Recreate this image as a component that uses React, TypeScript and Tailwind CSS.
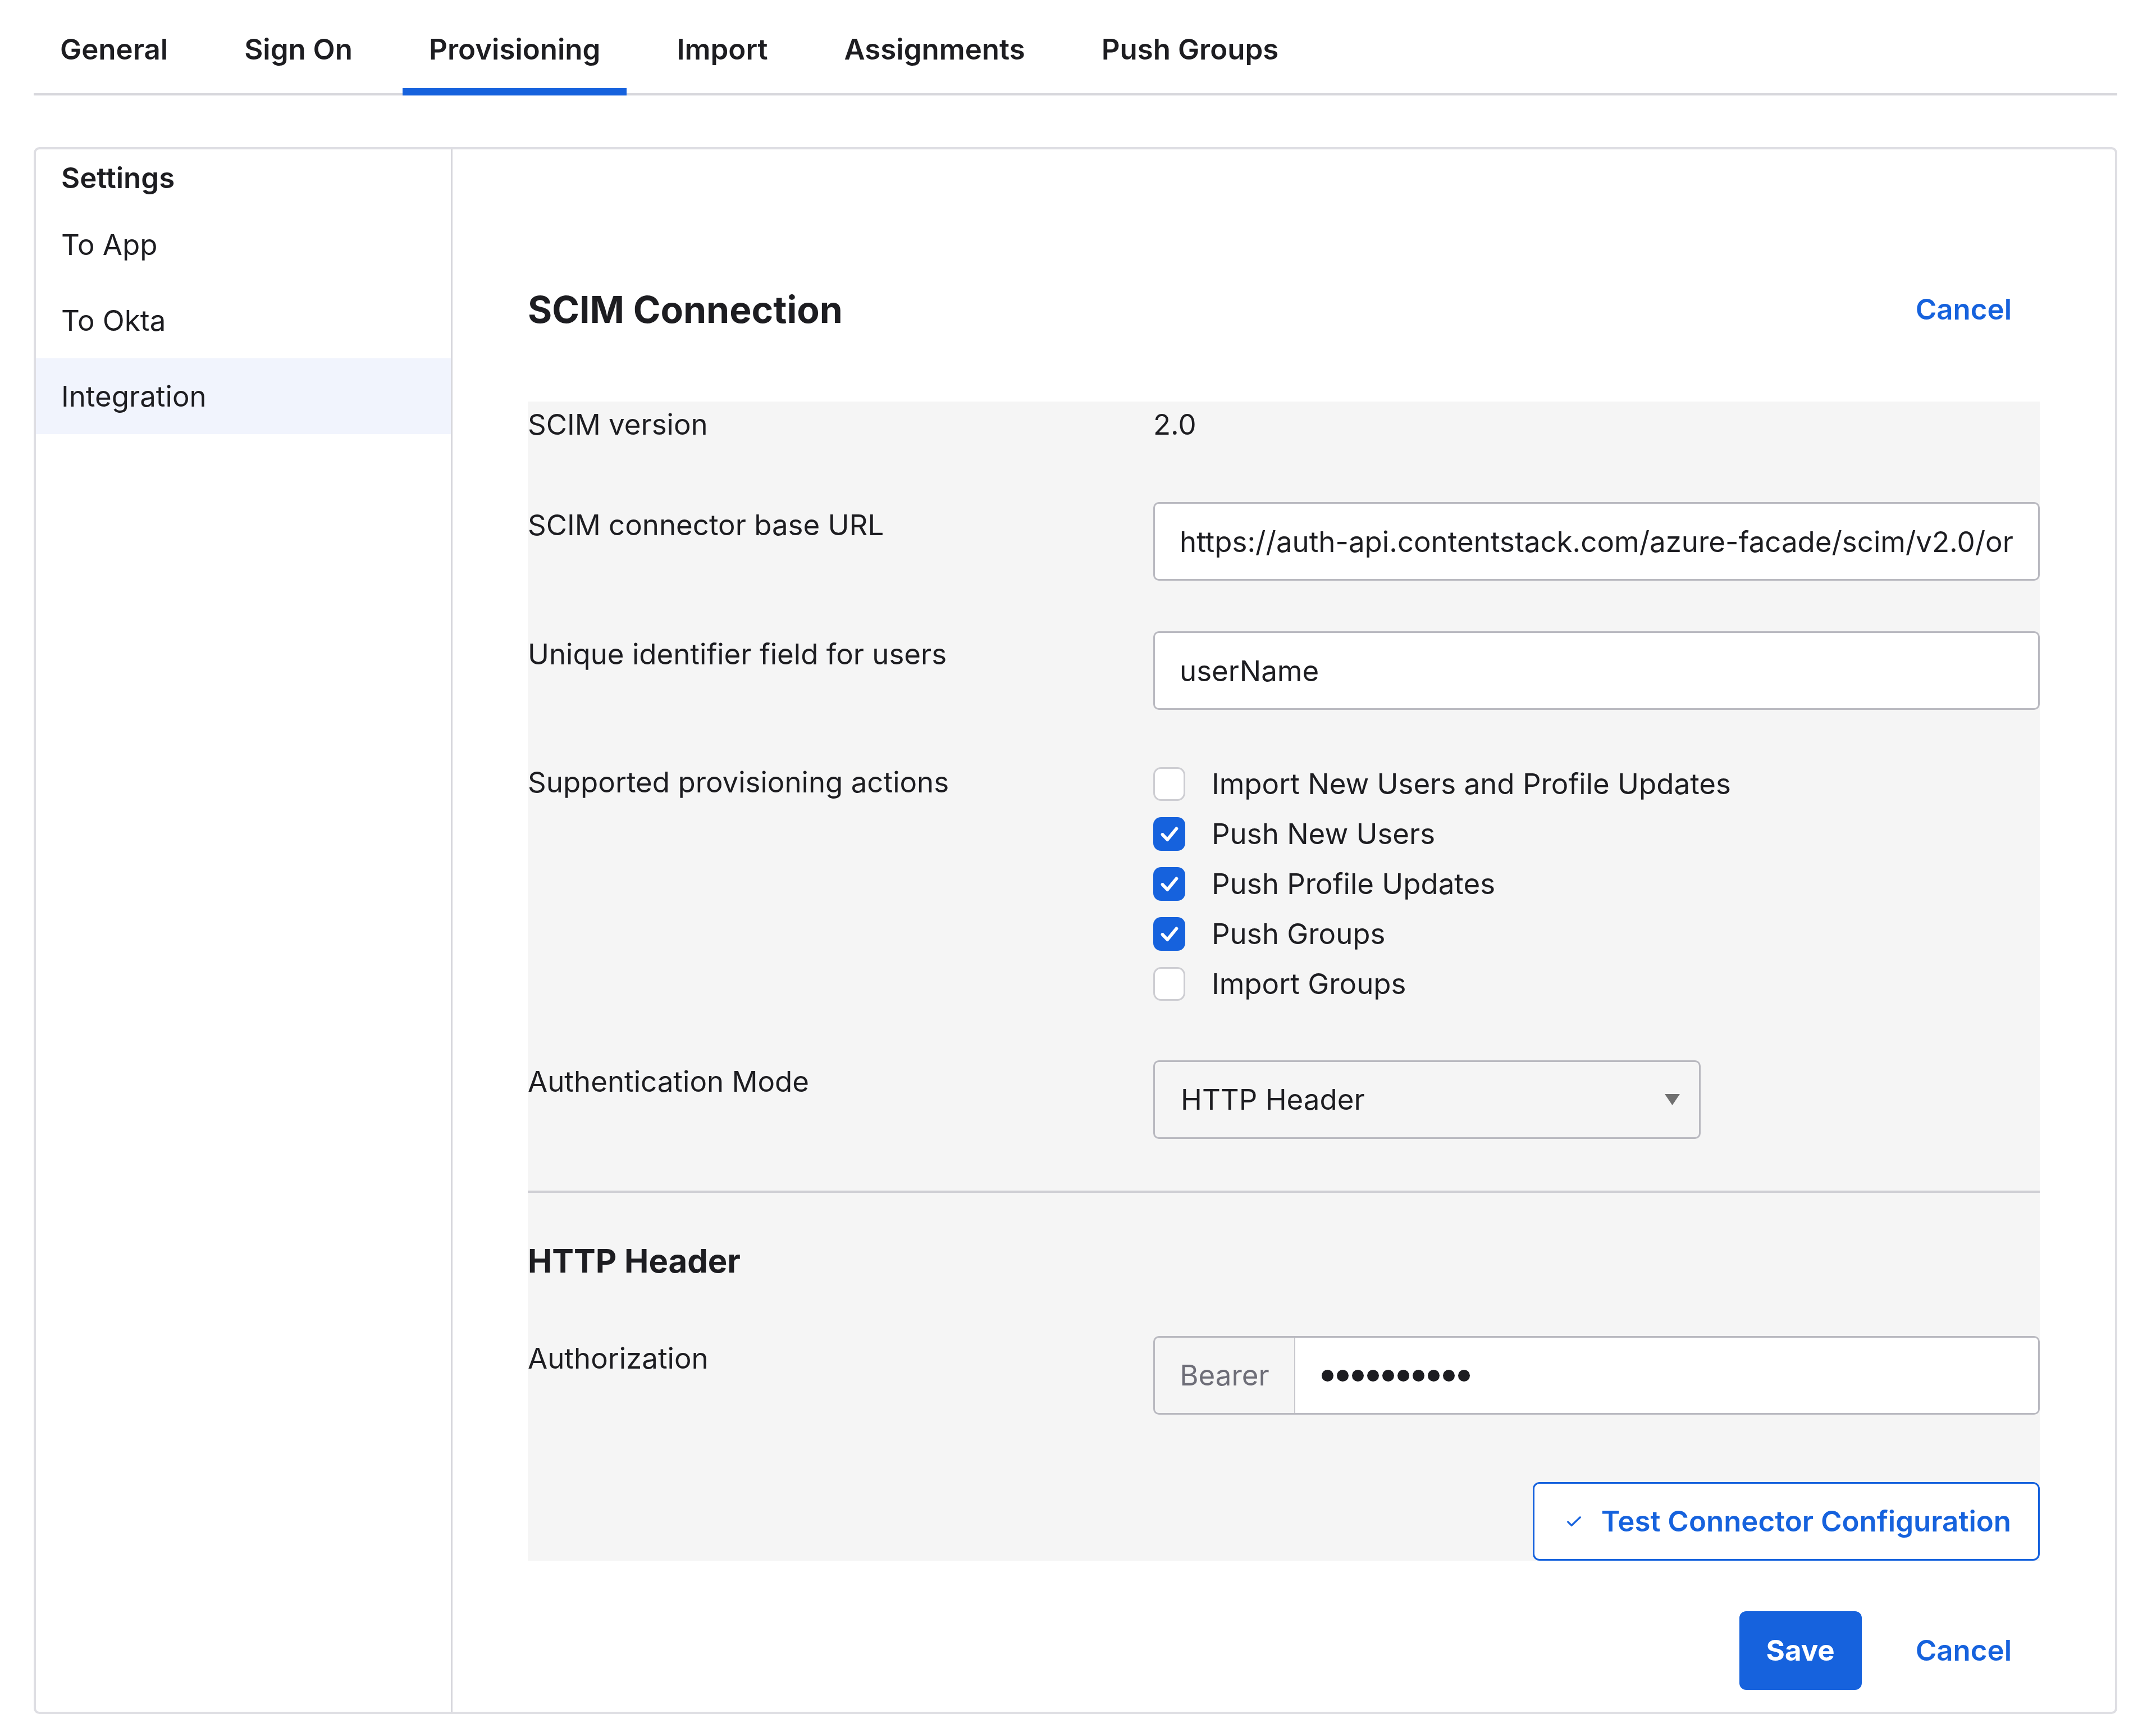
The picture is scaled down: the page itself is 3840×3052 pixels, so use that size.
import { useState } from 'react'

const TABS = ['General', 'Sign On', 'Provisioning', 'Import', 'Assignments', 'Push Groups']
const SIDE = ['To App', 'To Okta', 'Integration']
const ACTIONS: [string, boolean][] = [
  ['Import New Users and Profile Updates', false],
  ['Push New Users', true],
  ['Push Profile Updates', true],
  ['Push Groups', true],
  ['Import Groups', false],
]

function Checkbox({ checked }: { checked: boolean }) {
  return checked ? (
    <span className="grid h-[60px] w-[57px] shrink-0 place-items-center rounded-[14px] bg-[#1662dd]">
      <svg viewBox="0 0 24 24" className="size-[46px]" fill="none" stroke="white" strokeWidth="3" strokeLinecap="round" strokeLinejoin="round" aria-hidden="true">
        <path d="M5.5 12.5l4.5 4.8L18.5 7" />
      </svg>
    </span>
  ) : (
    <span className="h-[60px] w-[57px] shrink-0 rounded-[14px] border-[3px] border-[#cdcdd2] bg-white" />
  )
}

// Okta-style SCIM provisioning settings, rendered at ~2.45x.
export default function App() {
  const [active] = useState('Provisioning')

  return (
    <div className="h-[3052px] w-[3840px] overflow-hidden bg-white pl-[60px] pr-[69px] font-['Inter','Noto_Sans',sans-serif] text-[51px] leading-[66px] text-[#1d1d21]">
      <nav className="flex items-end gap-[42px] border-b-4 border-[#d7d7dc]">
        {TABS.map((t) => (
          <div
            key={t}
            className={
              t === active
                ? '-mb-[4px] flex h-[170px] items-center border-b-[13px] border-[#1662dd] px-[47px] pt-[19px] font-semibold'
                : '-mb-[4px] flex h-[170px] items-center border-b-[13px] border-transparent px-[47px] pt-[19px] font-semibold'
            }
          >
            {t}
          </div>
        ))}
      </nav>

      <div className="mt-[92px] flex h-[2790px] rounded-[10px] border-4 border-[#dedee3]">
        <aside className="w-[742px] shrink-0 border-r-[3px] border-[#d7d7dc]">
          <div className="flex h-[102px] items-center pl-[45px] font-semibold">Settings</div>
          {SIDE.map((s) => (
            <div
              key={s}
              className={
                s === 'Integration'
                  ? 'flex h-[135px] items-center bg-[#f1f4fd] pl-[45px]'
                  : 'flex h-[135px] items-center pl-[45px]'
              }
            >
              {s}
            </div>
          ))}
        </aside>

        <main className="flex-1 px-[134px]">
          <div className="flex items-center justify-between pt-[246px]">
            <h2 className="text-[66px] leading-[78px] font-bold">SCIM Connection</h2>
            <button className="px-[50px] font-semibold text-[#1662dd]">Cancel</button>
          </div>

          <section className="mt-[125px] bg-[#f5f5f5] pt-[8px]">
            <div className="grid grid-cols-[1114px_1fr]">
              <span>SCIM version</span>
              <span>2.0</span>
            </div>

            <div className="mt-[105px] grid grid-cols-[1114px_1fr]">
              <span className="pt-[8px]">SCIM connector base URL</span>
              <input
                readOnly
                value="https://auth-api.contentstack.com/azure-facade/scim/v2.0/organizations/blt0a1b2c3d4e5f"
                className="h-[140px] w-full rounded-[10px] border-[3px] border-[#b9b9c0] bg-white px-[44px] text-[#1d1d21] outline-none"
              />
            </div>

            <div className="mt-[90px] grid grid-cols-[1114px_1fr]">
              <span className="pt-[8px]">Unique identifier field for users</span>
              <input
                readOnly
                value="userName"
                className="h-[140px] w-full rounded-[10px] border-[3px] border-[#b9b9c0] bg-white px-[44px] text-[#1d1d21] outline-none"
              />
            </div>

            <div className="mt-[87px] grid grid-cols-[1114px_1fr]">
              <span className="pt-[9px]">Supported provisioning actions</span>
              <div className="flex flex-col">
                {ACTIONS.map(([label, on]) => (
                  <label key={label} className="flex h-[89px] items-center gap-[47px]">
                    <Checkbox checked={on} />
                    <span>{label}</span>
                  </label>
                ))}
              </div>
            </div>

            <div className="mt-[92px] grid grid-cols-[1114px_1fr]">
              <span className="pt-[5px]">Authentication Mode</span>
              <div className="flex h-[140px] w-[975px] items-center justify-between rounded-[10px] border-[3px] border-[#b9b9c0] pr-[34px] pl-[46px]">
                <span>HTTP Header</span>
                <svg viewBox="0 0 27 20" className="h-[20px] w-[27px]" aria-hidden="true">
                  <path d="M0 0h27L13.5 20z" fill="#707070" />
                </svg>
              </div>
            </div>

            <div className="mt-[92px] h-[4px] bg-[#cfcfd4]" />

            <h3 className="mt-[86px] text-[58px] leading-[70px] font-bold">HTTP Header</h3>

            <div className="mt-[99px] grid grid-cols-[1114px_1fr]">
              <span className="pt-[7px]">Authorization</span>
              <div className="flex h-[140px] overflow-hidden rounded-[10px] border-[3px] border-[#b9b9c0]">
                <div className="flex w-[250px] shrink-0 items-center justify-center border-r-2 border-[#c8c8ce] text-[#6e6e78]">
                  Bearer
                </div>
                <div className="flex flex-1 items-center gap-[6px] bg-white pl-[47px]">
                  {Array.from({ length: 10 }).map((_, i) => (
                    <span key={i} className="size-[21px] rounded-full bg-[#1d1d21]" />
                  ))}
                </div>
              </div>
            </div>

            <div className="mt-[120px] flex justify-end">
              <button className="flex h-[140px] items-center gap-[34px] rounded-[12px] border-[3px] border-[#1662dd] bg-white pr-[48px] pl-[56px] font-semibold text-[#1662dd]">
                <svg viewBox="0 0 15 10" className="h-[18px] w-[29px]" fill="none" stroke="#1662dd" strokeWidth="1.8" strokeLinecap="round" strokeLinejoin="round" aria-hidden="true">
                  <path d="M1.5 5.5l3.5 3.5L13.5 1" />
                </svg>
                Test Connector Configuration
              </button>
            </div>
          </section>

          <div className="mt-[90px] flex items-center justify-end gap-[46px]">
            <button className="h-[140px] rounded-[12px] bg-[#1662dd] px-[48px] font-bold text-white">Save</button>
            <button className="px-[50px] font-semibold text-[#1662dd]">Cancel</button>
          </div>
        </main>
      </div>
    </div>
  )
}
